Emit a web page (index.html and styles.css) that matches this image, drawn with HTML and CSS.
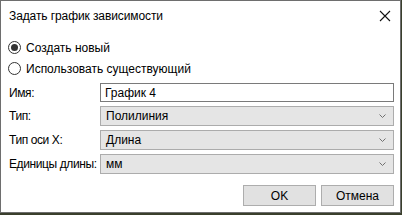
FILE: index.html
```html
<!DOCTYPE html>
<html lang="ru">
<head>
<meta charset="utf-8">
<title>Задать график зависимости</title>
<link rel="stylesheet" href="styles.css">
</head>
<body>
<div class="window">
  <div class="titlebar">
    <span class="title">Задать график зависимости</span>
    <span class="close">
      <svg width="12" height="12" viewBox="0 0 12 12"><path d="M1 1 L11 11 M11 1 L1 11" stroke="#111" stroke-width="1.1" fill="none"/></svg>
    </span>
  </div>
  <div class="content">
    <div class="radios">
      <label class="radio"><span class="circle checked"></span><span>Создать новый</span></label>
      <label class="radio"><span class="circle"></span><span>Использовать существующий</span></label>
    </div>
    <div class="form">
      <span class="label">Имя:</span>
      <div class="input">График 4</div>
      <span class="label">Тип:</span>
      <div class="select"><span>Полилиния</span><svg width="7" height="4" viewBox="0 0 7 4"><path d="M0.5 0.5 L3.5 3.5 L6.5 0.5" stroke="#707070" fill="none"/></svg></div>
      <span class="label">Тип оси X:</span>
      <div class="select"><span>Длина</span><svg width="7" height="4" viewBox="0 0 7 4"><path d="M0.5 0.5 L3.5 3.5 L6.5 0.5" stroke="#707070" fill="none"/></svg></div>
      <span class="label">Единицы длины:</span>
      <div class="select"><span>мм</span><svg width="7" height="4" viewBox="0 0 7 4"><path d="M0.5 0.5 L3.5 3.5 L6.5 0.5" stroke="#707070" fill="none"/></svg></div>
    </div>
    <div class="buttons">
      <button class="btn">OK</button>
      <button class="btn">Отмена</button>
    </div>
  </div>
</div>
</body>
</html>
```

FILE: styles.css
```css
html, body {
  margin: 0;
  padding: 0;
}
body {
  width: 402px;
  height: 215px;
  background: #3a3f2c;
  font-family: "Liberation Sans", Arial, sans-serif;
  font-size: 12px;
  color: #000;
  overflow: hidden;
}
.window {
  box-sizing: border-box;
  width: 401px;
  height: 213px;
  background: #fff;
  border: 1px solid #6e6e6e;
  display: flex;
  flex-direction: column;
}
.titlebar {
  height: 30px;
  display: flex;
  align-items: center;
  justify-content: space-between;
  padding-left: 8px;
  padding-right: 9px;
}
.title {
  font-size: 12px;
  letter-spacing: -0.1px;
}
.close {
  display: flex;
  width: 12px;
  height: 12px;
}
.content {
  padding: 6px 6px 0 7px;
  display: flex;
  flex-direction: column;
}
.radios {
  display: flex;
  flex-direction: column;
}
.radio {
  height: 21px;
  display: flex;
  align-items: center;
  gap: 5px;
}
.circle {
  box-sizing: border-box;
  width: 13px;
  height: 13px;
  border: 1px solid #333;
  border-radius: 50%;
  display: flex;
  align-items: center;
  justify-content: center;
}
.circle.checked::after {
  content: "";
  width: 7px;
  height: 7px;
  border-radius: 50%;
  background: #333;
}
.form {
  margin-top: 4px;
  display: grid;
  grid-template-columns: 92px 1fr;
  row-gap: 4px;
  align-items: center;
}
.label {
  padding-left: 1px;
  white-space: nowrap;
  letter-spacing: -0.4px;
}
.input, .select {
  box-sizing: border-box;
  height: 20px;
  display: flex;
  align-items: center;
  padding-left: 4px;
}
.input {
  height: 19px;
  border: 1px solid #7a7a7a;
  background: #fff;
}
.select {
  border: 1px solid #acacac;
  background: #e5e5e5;
  justify-content: space-between;
  padding-right: 7px;
  padding-left: 5px;
}
.buttons {
  margin-top: 11px;
  display: flex;
  justify-content: flex-end;
  gap: 5px;
}
.btn {
  box-sizing: border-box;
  width: 73px;
  height: 21px;
  border: 1px solid #adadad;
  background: #e1e1e1;
  font-family: "Liberation Sans", Arial, sans-serif;
  font-size: 12px;
  color: #000;
  padding: 0;
}
```
